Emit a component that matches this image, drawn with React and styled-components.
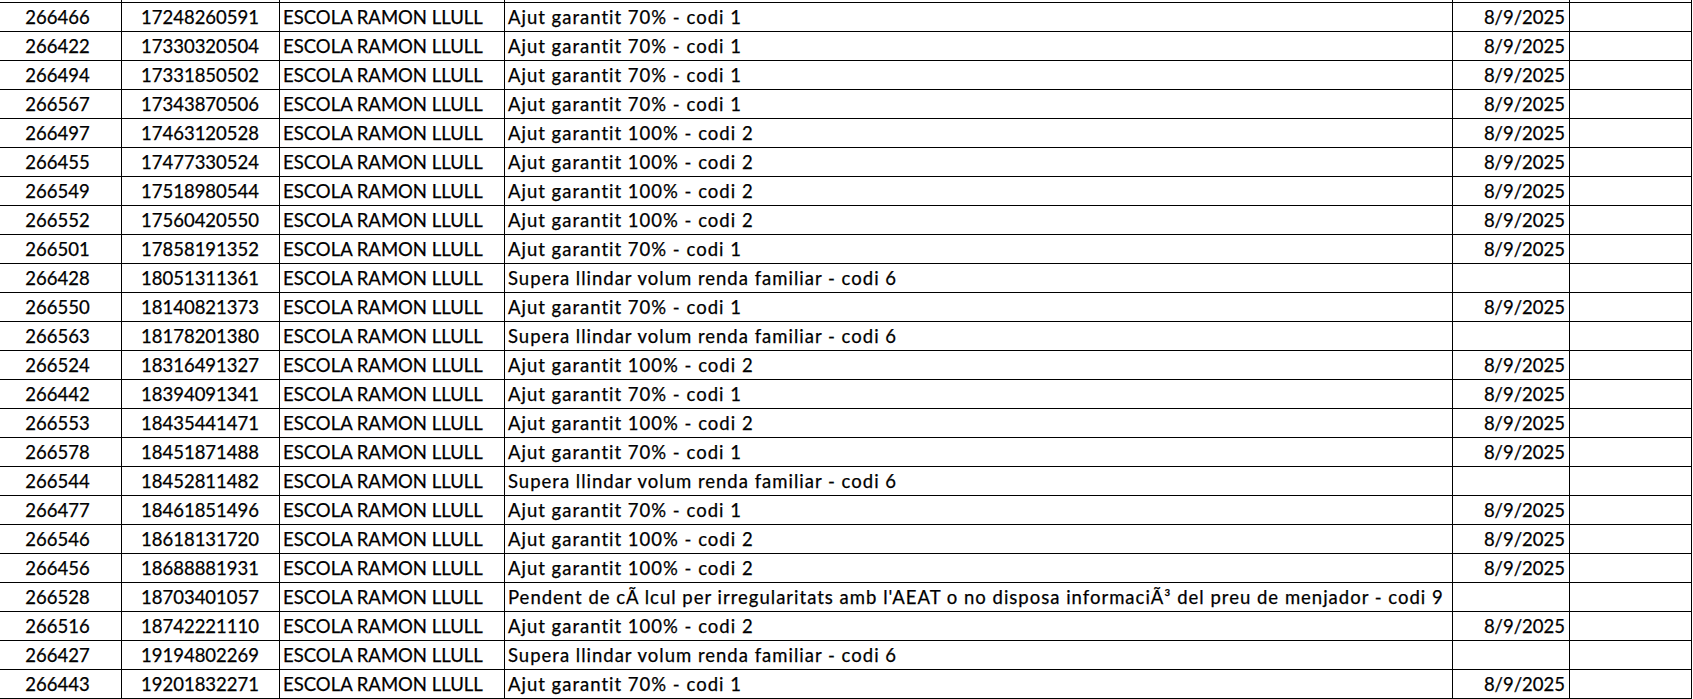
import React from "react";
import styled, { createGlobalStyle } from "styled-components";

const Global = createGlobalStyle`
  html, body { margin: 0; padding: 0; background: #ffffff; overflow: hidden; }
  body { font-family: Lato, "Open Sans", sans-serif; }
`;

const COLS = "127px 158px 225px 948px 117px 122px";

const Sheet = styled.div`
  margin-top: -26px;
  margin-left: -5px;
  display: flex;
  flex-direction: column;
  width: 1697px;
`;

const Row = styled.div`
  display: grid;
  grid-template-columns: ${COLS} 1fr;
  height: 29px;
`;

const Cell = styled.div`
  box-sizing: border-box;
  height: 29px;
  border-right: ${(p) => (p.$tail ? "none" : "1px solid #000")};
  border-bottom: ${(p) => (p.$tail ? "none" : "1px solid #000")};
  display: flex;
  align-items: flex-end;
  justify-content: ${(p) =>
    p.$align === "center" ? "center" : p.$align === "right" ? "flex-end" : "flex-start"};
  padding: 0 4px 3px 3px;
  font-family: Lato, "Open Sans", sans-serif;
  font-size: 18.5px;
  line-height: 22px;
  letter-spacing: ${(p) => (p.$wide ? "1px" : "0")};
  color: #000;
  -webkit-text-stroke: 0.25px #000;
  white-space: nowrap;
  overflow: hidden;
`;

const A70 = "Ajut garantit 70% - codi 1";
const A100 = "Ajut garantit 100% - codi 2";
const S6 = "Supera llindar volum renda familiar - codi 6";
const P9 =
  "Pendent de c\u00C3\u00A0lcul per irregularitats amb l'AEAT o no disposa informaci\u00C3\u00B3 del preu de menjador - codi 9";
const D = "8/9/2025";

const rows = [
  ["266466", "17248260591", A70, D],
  ["266422", "17330320504", A70, D],
  ["266494", "17331850502", A70, D],
  ["266567", "17343870506", A70, D],
  ["266497", "17463120528", A100, D],
  ["266455", "17477330524", A100, D],
  ["266549", "17518980544", A100, D],
  ["266552", "17560420550", A100, D],
  ["266501", "17858191352", A70, D],
  ["266428", "18051311361", S6, ""],
  ["266550", "18140821373", A70, D],
  ["266563", "18178201380", S6, ""],
  ["266524", "18316491327", A100, D],
  ["266442", "18394091341", A70, D],
  ["266553", "18435441471", A100, D],
  ["266578", "18451871488", A70, D],
  ["266544", "18452811482", S6, ""],
  ["266477", "18461851496", A70, D],
  ["266546", "18618131720", A100, D],
  ["266456", "18688881931", A100, D],
  ["266528", "18703401057", P9, ""],
  ["266516", "18742221110", A100, D],
  ["266427", "19194802269", S6, ""],
  ["266443", "19201832271", A70, D],
];

function DataRow({ cells, school = "ESCOLA RAMON LLULL" }) {
  const [id, code, status, date] = cells;
  return (
    <Row>
      <Cell $align="center">{id}</Cell>
      <Cell $align="center">{code}</Cell>
      <Cell>{school}</Cell>
      <Cell $wide>{status}</Cell>
      <Cell $align="right">{date}</Cell>
      <Cell />
      <Cell $tail />
    </Row>
  );
}

export default function App() {
  return (
    <>
      <Global />
      <Sheet>
        <DataRow cells={["", "", "", ""]} school="" />
        {rows.map((r) => (
          <DataRow key={r[0]} cells={r} />
        ))}
      </Sheet>
    </>
  );
}
